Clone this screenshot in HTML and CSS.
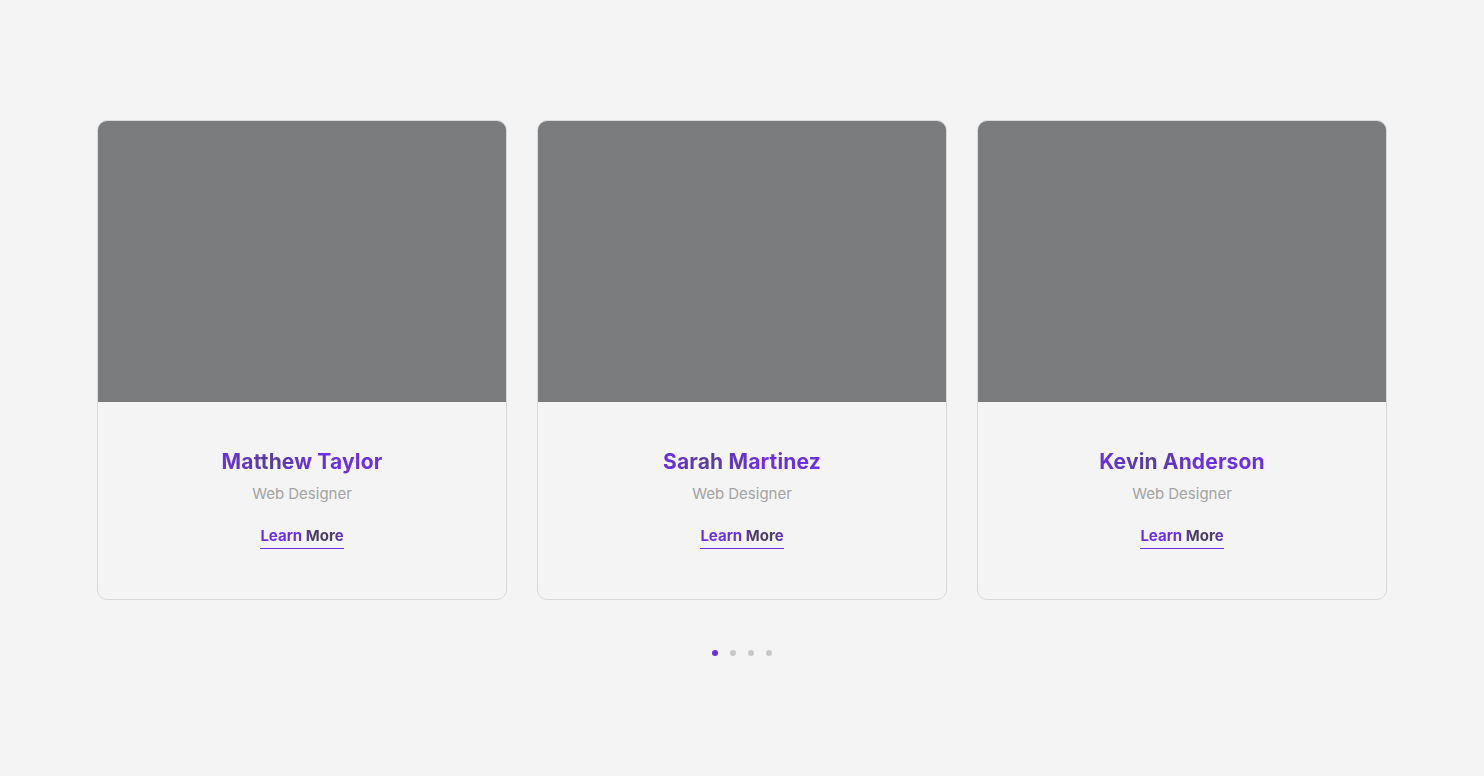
FILE: index.html
```html
<!DOCTYPE html>
<html>
<head>
<meta charset="utf-8">
<link rel="stylesheet" href="styles.css">
</head>
<body>
<main class="page">
  <section class="cards">
    <article class="card">
      <div class="photo"></div>
      <div class="info">
        <h3 class="name">Matthew Taylor</h3>
        <p class="role">Web Designer</p>
        <a class="more" href="#">Learn More</a>
      </div>
    </article>
    <article class="card">
      <div class="photo"></div>
      <div class="info">
        <h3 class="name">Sarah Martinez</h3>
        <p class="role">Web Designer</p>
        <a class="more" href="#">Learn More</a>
      </div>
    </article>
    <article class="card">
      <div class="photo"></div>
      <div class="info">
        <h3 class="name">Kevin Anderson</h3>
        <p class="role">Web Designer</p>
        <a class="more" href="#">Learn More</a>
      </div>
    </article>
  </section>
  <div class="dots">
    <span class="dot active"></span>
    <span class="dot"></span>
    <span class="dot"></span>
    <span class="dot"></span>
  </div>
</main>
</body>
</html>
```
FILE: styles.css
```css
html, body {
  margin: 0;
  padding: 0;
  background: #f4f4f4;
  font-family: "Inter", "Noto Sans", sans-serif;
}
.page {
  width: 1484px;
  height: 776px;
  padding-top: 120px;
  box-sizing: border-box;
}
.cards {
  display: flex;
  justify-content: center;
  gap: 30px;
}
.card {
  width: 410px;
  height: 480px;
  box-sizing: border-box;
  border: 1px solid #d9d9d9;
  border-radius: 10px;
  overflow: hidden;
  background: #f4f4f4;
}
.photo {
  height: 281px;
  background: #7a7b7d;
}
.info {
  display: flex;
  flex-direction: column;
  align-items: center;
  padding-top: 43px;
}
.name {
  margin: 0;
  font-size: 21px;
  font-weight: 700;
  line-height: 34px;
  letter-spacing: 0.15px;
  background: linear-gradient(90deg, #6a30e0 0%, #573f93 30%, #6a30e0 60%, #6a30e0 100%);
  -webkit-background-clip: text;
  background-clip: text;
  color: transparent;
}
.role {
  margin: 0;
  margin-top: 5px;
  font-size: 15px;
  line-height: 20px;
  color: #a3a3a3;
}
.more {
  margin-top: 22px;
  font-size: 15px;
  font-weight: 700;
  line-height: 20px;
  text-decoration: none;
  padding-bottom: 2px;
  border-bottom: 1px solid #6a30e0;
  background: linear-gradient(90deg, #6a30e0 0%, #6a30e0 45%, #4b3d5e 65%, #4b3d5e 85%, #6a30e0 100%);
  -webkit-background-clip: text;
  background-clip: text;
  color: transparent;
}
.dots {
  display: flex;
  justify-content: center;
  gap: 12px;
  margin-top: 50px;
}
.dot {
  width: 6px;
  height: 6px;
  border-radius: 50%;
  background: #c8c8c8;
}
.dot.active {
  background: #6a30e0;
}
```
